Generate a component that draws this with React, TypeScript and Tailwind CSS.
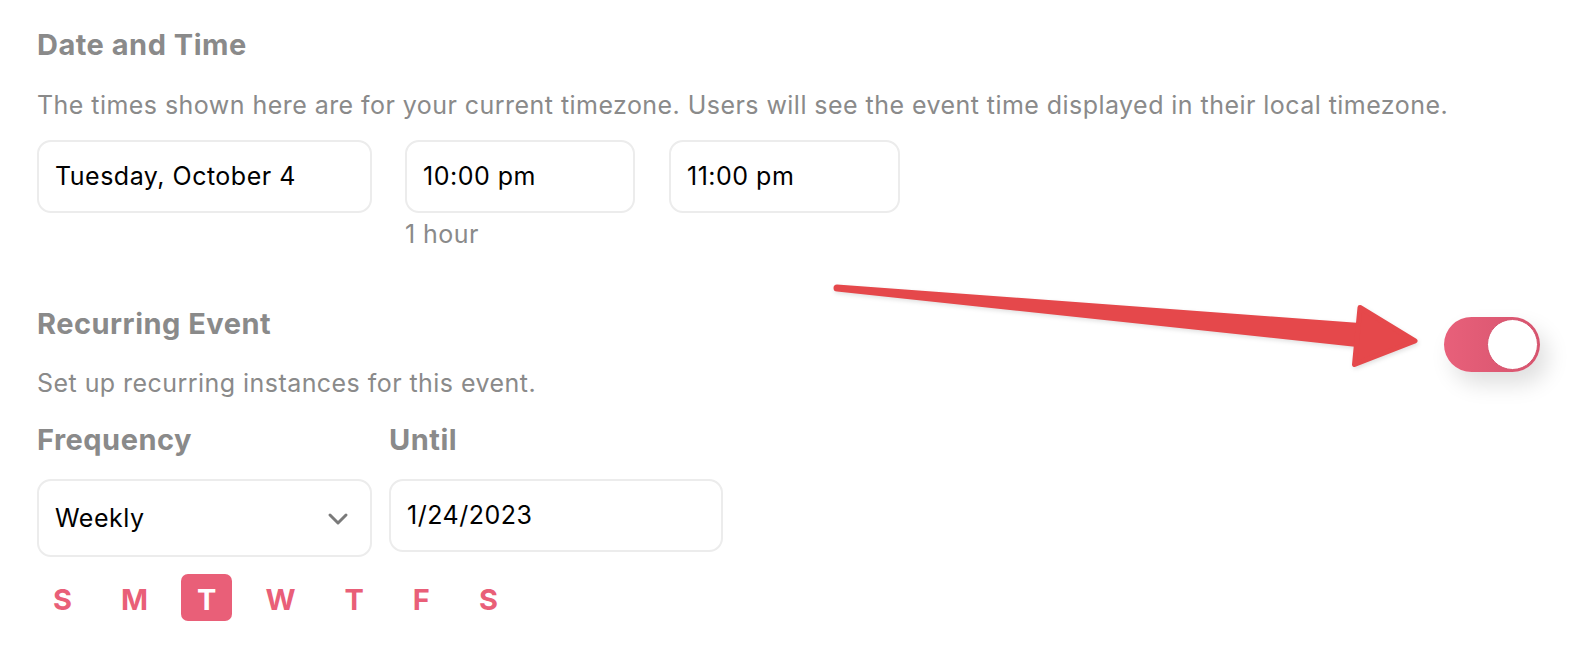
import React, { useState } from "react";

const days = ["S", "M", "T", "W", "T", "F", "S"];

function Arrow() {
  return (
    <svg
      className="pointer-events-none absolute left-0 top-0"
      width="1576"
      height="660"
      viewBox="0 0 1576 660"
      style={{ filter: "drop-shadow(1px 2px 2px rgba(0,0,0,0.12))" }}
    >
      <path d="M837 284.5 L1360 323 L1357 347 L837 291.5 A3.5 3.5 0 0 1 837 284.5 Z" fill="#e5484b" />
      <path
        d="M1360 307.5 L1415 341 L1354.5 364.5 Z"
        fill="#e5484b"
        stroke="#e5484b"
        strokeWidth="5"
        strokeLinejoin="round"
      />
    </svg>
  );
}

export default function App() {
  const [recurring, setRecurring] = useState(true);
  const [selected, setSelected] = useState(2);

  return (
    <div
      className="relative h-[660px] w-[1576px] overflow-hidden bg-white pl-[37px] pr-[36px] pt-[29px]"
      style={{ fontFamily: "Inter, 'Noto Sans', sans-serif" }}
    >
      <h2 className="text-[29px] font-bold leading-[32px] tracking-[0.5px] text-[#8a8a8a]">Date and Time</h2>
      <p className="mt-[30px] text-[25px] leading-[28px] tracking-[0.45px] text-[#8a8a8a]">
        The times shown here are for your current timezone. Users will see the event time displayed in their local timezone.
      </p>

      <div className="mt-[21px] flex items-start">
        <div className="flex h-[73px] w-[335px] items-center rounded-[14px] border-2 border-[#ececec] px-[16px] text-[25px] tracking-[0.5px] text-black">
          Tuesday, October 4
        </div>
        <div className="ml-[33px] flex flex-col">
          <div className="flex h-[73px] w-[230px] items-center rounded-[14px] border-2 border-[#ececec] px-[16px] text-[25px] tracking-[0.5px] text-black">
            10:00 pm
          </div>
          <span className="mt-[7px] text-[25px] leading-[28px] tracking-[0.45px] text-[#8a8a8a]">1 hour</span>
        </div>
        <div className="ml-[34px] flex h-[73px] w-[231px] items-center rounded-[14px] border-2 border-[#ececec] px-[16px] text-[25px] tracking-[0.5px] text-black">
          11:00 pm
        </div>
      </div>

      <div className="mt-[60px] flex items-start justify-between">
        <div>
          <h2 className="text-[29px] font-bold leading-[32px] tracking-[0.5px] text-[#8a8a8a]">Recurring Event</h2>
          <p className="mt-[29px] text-[25px] leading-[28px] tracking-[0.45px] text-[#8a8a8a]">
            Set up recurring instances for this event.
          </p>
        </div>
        <button
          onClick={() => setRecurring(!recurring)}
          className="mt-[9px] flex h-[55px] w-[96px] items-center justify-end rounded-full bg-gradient-to-r from-[#e8607a] to-[#d6546e] p-[2px] shadow-[8px_12px_22px_rgba(0,0,0,0.13)]"
        >
          <span className="block h-[51px] w-[51px] rounded-full border border-[#d6546e] bg-white" />
        </button>
      </div>

      <div className="mt-[27px] flex items-start gap-[17px]">
        <div className="flex w-[335px] flex-col">
          <span className="text-[29px] font-bold leading-[32px] tracking-[0.5px] text-[#8a8a8a]">Frequency</span>
          <div className="mt-[23px] flex h-[78px] items-center justify-between rounded-[14px] border-2 border-[#ececec] pl-[16px] pr-[21px] pt-[2px] text-[25px] tracking-[0.5px] text-black">
            <span>Weekly</span>
            <svg width="22" height="14" viewBox="0 0 22 14" fill="none">
              <path d="M3 3 L11 11 L19 3" stroke="#7a7a7a" strokeWidth="3" strokeLinecap="round" strokeLinejoin="round" />
            </svg>
          </div>
        </div>
        <div className="flex w-[334px] flex-col">
          <span className="text-[29px] font-bold leading-[32px] tracking-[0.5px] text-[#8a8a8a]">Until</span>
          <div className="mt-[23px] flex h-[73px] items-center rounded-[14px] border-2 border-[#ececec] px-[16px] text-[25px] tracking-[0.5px] text-black">
            1/24/2023
          </div>
        </div>
      </div>

      <div className="mt-[17px] flex gap-[17px]">
        {days.map((d, i) => (
          <button
            key={i}
            onClick={() => setSelected(i)}
            className={
              "flex h-[47px] items-center justify-center rounded-[7px] px-4 pt-[5px] text-[29px] font-bold " +
              (selected === i ? "bg-[#e95f78] text-white" : "text-[#e95f78]")
            }
          >
            {d}
          </button>
        ))}
      </div>

      <Arrow />
    </div>
  );
}
